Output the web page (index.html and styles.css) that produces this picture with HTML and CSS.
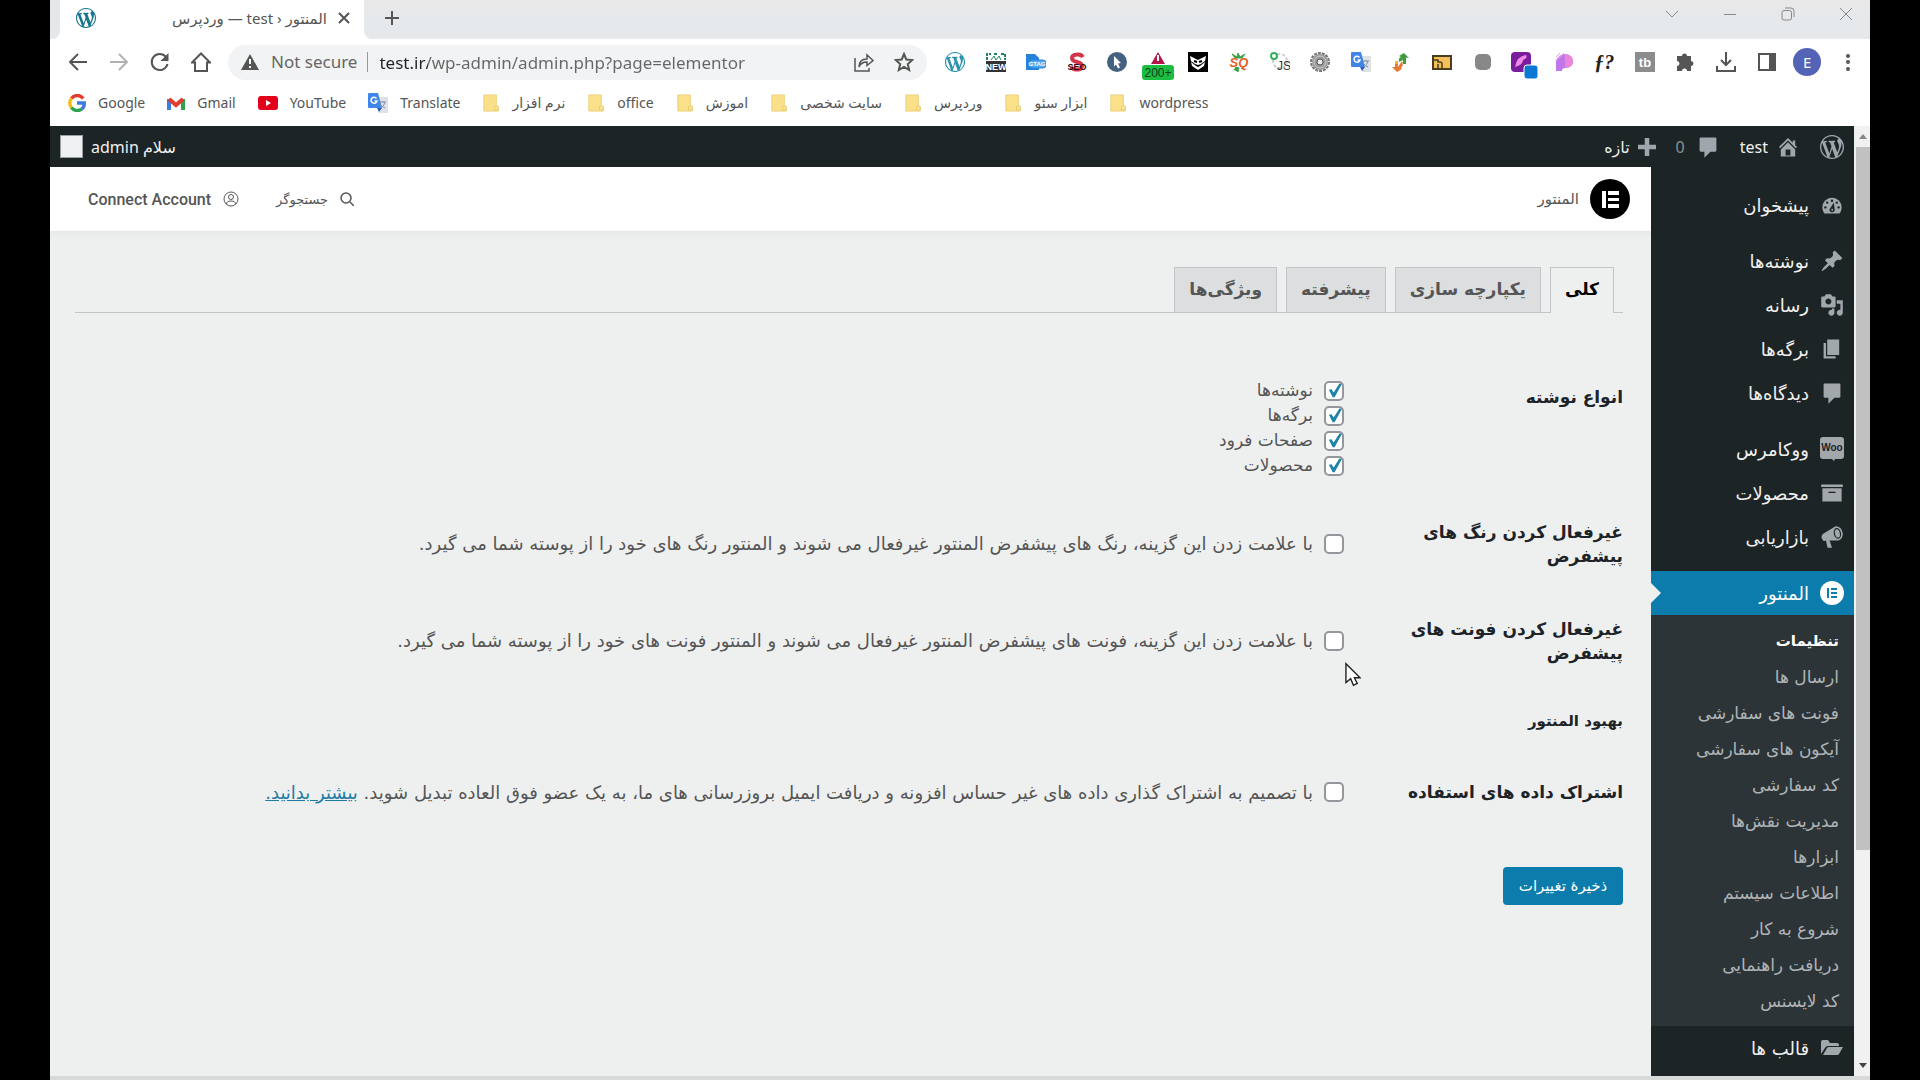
FILE: index.html
```html
<!DOCTYPE html>
<html lang="fa">
<head>
    <meta charset="UTF-8">
    <meta name="viewport" content="width=device-width, initial-scale=1.0">
    <title>المنتور ‹ test — وردپرس</title>
    <link rel="stylesheet" href="styles.css">
</head>
<body>
    <svg class="sprite" aria-hidden="true">
        <symbol id="wp" viewBox="0 0 20 20"><path d="M20 10c0-5.51-4.49-10-10-10C4.48 0 0 4.49 0 10c0 5.52 4.48 10 10 10 5.51 0 10-4.48 10-10zM7.78 15.37L4.37 6.22c.55-.02 1.17-.08 1.17-.08.5-.06.44-1.13-.06-1.11 0 0-1.45.11-2.37.11-.18 0-.37 0-.58-.01C4.12 2.69 6.87 1.11 10 1.11c2.33 0 4.45.87 6.05 2.34-.68-.11-1.65.39-1.65 1.58 0 .74.45 1.36.9 2.1.35.61.55 1.36.55 2.46 0 1.49-1.4 5-1.4 5l-3.03-8.37c.54-.02.82-.17.82-.17.5-.05.44-1.25-.06-1.22 0 0-1.44.12-2.38.12-.87 0-2.33-.12-2.33-.12-.5-.03-.56 1.2-.06 1.22l.92.08 1.26 3.41zM17.41 10c.24-.64.74-1.87.43-4.25.7 1.29 1.05 2.71 1.05 4.25 0 3.29-1.73 6.24-4.4 7.78.97-2.59 1.94-5.2 2.92-7.78zM6.1 18.09C3.12 16.65 1.11 13.53 1.11 10c0-1.3.23-2.48.72-3.59C3.25 10.3 4.67 14.2 6.1 18.09zm4.03-6.63l2.58 6.98c-.86.29-1.76.45-2.71.45-.79 0-1.57-.11-2.29-.33.81-2.38 1.62-4.74 2.42-7.1z"/></symbol>
        <symbol id="comment" viewBox="0 0 20 20"><path d="M4 2h12c.6 0 1 .4 1 1v10c0 .6-.4 1-1 1h-4l-5 5v-5H4c-.6 0-1-.4-1-1V3c0-.6.4-1 1-1z"/></symbol>
        <symbol id="folder" viewBox="0 0 18 20"><path d="M1 1h14v12l2 1v5H1z" fill="#fbe08a" stroke="#ead07c"/><path d="M13 18v-4l2-1 2 1v4z" fill="#fbe7a4" stroke="#e5c863"/></symbol>
        <symbol id="translate" viewBox="0 0 20 20"><path d="M8 4h12v16H11z" fill="#dfe1e5"/><path d="M1 0h9l4 15H1c-1 0-1-1-1-1V1s0-1 1-1z" fill="#3f86e8"/><path d="M9 15h5l-3 4z" fill="#2b5fc0"/><path d="M8.500 5.500A3 3 0 1 0 9 8H6.500" fill="none" stroke="#fff" stroke-width="1.500"/><path d="M12 9h6m-3-1v1m2 0q-1 4-4 6m-1-4q2 3 5 4" fill="none" stroke="#7b8fa5"/></symbol>
    </svg>

    <div class="window">
        <header class="tabstrip">
            <div class="tab-left"></div>
            <div class="tab">
                <svg class="i20" viewBox="0 0 20 20" fill="#15758a"><use href="#wp"/></svg>
                <span class="tab-title" dir="rtl">المنتور ‹ test — وردپرس</span>
                <button class="plain" aria-label="Close tab"><svg class="i12" viewBox="0 0 12 12"><path class="line" d="M1 1l10 10M11 1L1 11"/></svg></button>
            </div>
            <div class="tab-rest">
                <button class="plain" aria-label="New tab"><svg class="i16" viewBox="0 0 16 16"><path class="line" d="M8 1v14M1 8h14"/></svg></button>
                <div class="win-controls">
                    <button class="plain" aria-label="Search tabs"><svg class="i14" viewBox="0 0 14 14"><path class="thin" d="M1 4l6 6 6-6"/></svg></button>
                    <button class="plain" aria-label="Minimize"><svg class="i14" viewBox="0 0 14 14"><path class="thin" d="M1 7.500h12"/></svg></button>
                    <button class="plain" aria-label="Restore"><svg class="i14" viewBox="0 0 14 14"><rect class="thin" x="1" y="3.500" width="9.500" height="9.500" rx="2"/><path class="thin" d="M4 1h6q3 0 3 3v6"/></svg></button>
                    <button class="plain" aria-label="Close"><svg class="i14" viewBox="0 0 14 14"><path class="thin" d="M1 1l12 12M13 1L1 13"/></svg></button>
                </div>
            </div>
        </header>

        <div class="toolbar">
            <div class="nav">
                <button class="plain" aria-label="Back"><svg class="i20" viewBox="0 0 20 20"><path class="line" d="M19 10H2M10 2l-8 8 8 8"/></svg></button>
                <button class="plain faded" aria-label="Forward"><svg class="i20" viewBox="0 0 20 20"><path class="line" d="M1 10h17M10 2l8 8-8 8"/></svg></button>
                <button class="plain" aria-label="Reload"><svg class="i20" viewBox="0 0 20 20"><path class="line" d="M16 5A8 8 0 1 0 17.500 12"/><path d="M18.500 1v8h-8z" fill="#555"/></svg></button>
                <button class="plain" aria-label="Home"><svg class="i20" viewBox="0 0 20 20"><path class="line" d="M1 10.500L10 1.500l9 9h-3V19H4v-8.500z"/></svg></button>
            </div>
            <div class="omnibox">
                <svg class="i18" viewBox="0 0 18 16"><path d="M9 0l9 16H0z" fill="#555"/><path d="M9 5v5M9 12v2" stroke="#fff" stroke-width="2"/></svg>
                <label class="secure" for="url">Not secure</label>
                <input class="url" id="url" type="text" value="test.ir/wp-admin/admin.php?page=elementor">
                <button class="plain" aria-label="Share"><svg class="i20" viewBox="0 0 20 20"><path class="mid" d="M1 6v13h14v-3M5 15q0-8 8-8V3l6 5.500-6 5V10q-6 0-8 5z"/></svg></button>
                <button class="plain" aria-label="Bookmark"><svg class="i20" viewBox="0 0 20 20"><path class="line" d="M10 2l2.300 5.500 6 .5-4.500 4 1.400 6-5.200-3.200L4.800 18l1.400-6L1.700 8l6-.5z"/></svg></button>
            </div>
            <div class="extensions">
                <svg class="i20" viewBox="0 0 20 20"><path d="M10 0v20M0 10h20" stroke="#777" stroke-width="2"/><circle cx="10" cy="10" r="9" fill="#fff"/><use href="#wp" fill="#2b93ad"/></svg>
                <svg class="i20" viewBox="0 0 20 20"><path d="M1 8V2h4m3 0h4m3 0h4v6" fill="none" stroke="#208060" stroke-width="2" stroke-dasharray="3 1"/><path d="M5 8l3-4 2 4 3-4 2 4" fill="none" stroke="#208060"/><path d="M0 9h20v11H0z" fill="#333"/><text x="10" y="18" class="ico-text" font-size="9" fill="#fff">NEW</text></svg>
                <svg class="i20" viewBox="0 0 20 20"><path d="M0 2h9l4 4v12H0z" fill="#2583dc"/><rect x="3" y="8" width="17" height="8" rx="3" fill="#55a8ee" stroke="#2583dc"/><text x="11" y="14" class="ico-text" font-size="6" fill="#fff">GTAG</text></svg>
                <svg class="i20" viewBox="0 0 20 20"><path d="M16 5Q14 2 10 2.500 5 3 5 6q0 3 5 4t5 4.500Q14 18 10 17.500 6 18 4 15" fill="none" stroke="#d2364b" stroke-width="4"/><text x="10" y="18" class="ico-text" font-size="9" fill="#3a0610">SEO</text></svg>
                <svg class="i20" viewBox="0 0 20 20"><circle cx="10" cy="10" r="10" fill="#456180"/><path d="M7 4l7 7-3 .5 2 4-2 1-2-4-2 2z" fill="#fff"/></svg>
                <svg class="badge-icon" viewBox="0 0 32 28"><path d="M16 0l7 12H9z" fill="#b2164b"/><path d="M16 3v6" stroke="#fff" stroke-width="2"/><rect x="0" y="13" width="32" height="15" rx="3" fill="#1bbd42"/><text x="16" y="25" class="ico-text light" font-size="12" fill="#103d1a">200+</text></svg>
                <svg class="i20" viewBox="0 0 20 20"><path d="M0 0h20v20H0z"/><path d="M2 4l8 4 8-4-1 5-4 3-3 1-3-1-4-3zM3 10l5 4 2 1 2-1 5-4-1 4-6 4-6-4z" fill="#fff"/><path d="M6 9l3 1M14 9l-3 1" stroke="#000" stroke-width="2"/></svg>
                <svg class="i20" viewBox="0 0 20 20"><path d="M3 2l5 3 1-4 2 4 5-3-3 4H6zM5 18l2-3 3 1-1 4M12 16l4 2" fill="#3aa04a" stroke="#3aa04a"/><text x="10" y="15" class="ico-text slant" font-size="13" fill="#e8602c">SQ</text></svg>
                <svg class="i20" viewBox="0 0 20 20"><circle cx="10" cy="9" r="7" fill="none" stroke="#ccc" stroke-width="2" stroke-dasharray="3 2"/><circle cx="4" cy="4" r="3" fill="#fff" stroke="#35ae5c" stroke-width="2"/><text x="14" y="18" class="ico-text light" font-size="12" fill="#333">JS</text></svg>
                <svg class="i20" viewBox="0 0 20 20"><circle cx="10" cy="10" r="8" fill="#999"/><circle cx="10" cy="10" r="9" fill="none" stroke="#777" stroke-width="2" stroke-dasharray="3 1"/><circle cx="10" cy="10" r="6" fill="none" stroke="#ccc"/><circle cx="10" cy="10" r="3" fill="#eee" stroke="#555"/></svg>
                <svg class="i20"><use href="#translate"/></svg>
                <svg class="i20" viewBox="0 0 20 20"><path d="M8 10q-1-4 2-5l-2-1 5-3 5 5-3-.5V12h-3V8z" fill="#3f9d3c"/><path d="M11 9q2 5-1 7l1 1-5 3-5-5h3v-3l3-2v5z" fill="#e87838"/><path d="M4 9h3v3H4z" fill="#f5b030"/></svg>
                <svg class="i20" viewBox="0 0 20 20"><path d="M1 4h18v13H1z" fill="#f2bf58" stroke="#4a3c20" stroke-width="2"/><path d="M2 8h4v2h2q2 0 2 2v4M6 16v-4" fill="none" stroke="#4a3c20" stroke-width="1.500"/></svg>
                <svg class="i20" viewBox="0 0 20 20"><rect x="2" y="2" width="16" height="16" rx="5" fill="#888"/></svg>
                <svg class="badge-icon" viewBox="0 0 32 28"><rect x="4" y="0" width="20" height="20" rx="4" fill="#7a1d9c"/><path d="M8 15Q10 4 19 3q2 3-3 5 0 5-8 7z" fill="#ef8ae6"/><rect x="17" y="13" width="14" height="14" rx="3" fill="#0b79d4" stroke="#fff"/></svg>
                <svg class="i20" viewBox="0 0 20 20"><path d="M2 8q4-6 9-6 8 1 8 7 0 7-8 7-3 0-3 3H2z" fill="#c077ea"/><path d="M11 2q8 1 8 7 0 7-8 7z" fill="#ec86d8"/><path d="M2 5l4-4M2 9l8-8" stroke="#df98ec"/></svg>
                <span class="fq">ƒ?</span>
                <svg class="i20" viewBox="0 0 20 20"><path d="M0 0h20v20H0z" fill="#8c8c8c"/><text x="10" y="15" class="ico-text" font-size="13" fill="#fff">tb</text></svg>
                <svg class="i20" viewBox="0 0 20 20"><path d="M7 4a2.500 2.500 0 0 1 5 0h4v5a2.500 2.500 0 0 1 0 5v5h-4a2.500 2.500 0 0 0-5 0H2v-5a2.500 2.500 0 0 0 0-5V4z" fill="#555"/></svg>
                <svg class="i20" viewBox="0 0 20 20"><path class="line" d="M10 0v12M5 8l5 5 5-5M1 14v5h18v-5"/></svg>
                <svg class="i20" viewBox="0 0 20 20"><path d="M2 2h16v16H2z" fill="none" stroke="#555" stroke-width="2"/><path d="M12 2h6v16h-6z" fill="#555"/></svg>
                <span class="profile">E</span>
                <svg class="i20" viewBox="0 0 20 20" fill="#555"><circle cx="10" cy="4" r="2"/><circle cx="10" cy="10" r="2"/><circle cx="10" cy="17" r="2"/></svg>
            </div>
        </div>

        <nav class="bookmarks">
            <a href="#"><svg class="i18" viewBox="0 0 16 16" fill="none" stroke-width="3"><path d="M13.500 4A6.500 6.500 0 0 0 3 4" stroke="#e33b2e"/><path d="M3 4a6.500 6.500 0 0 0 0 8" stroke="#f6b90c"/><path d="M3 12a6.500 6.500 0 0 0 9 1.500" stroke="#2fa24f"/><path d="M12 13.500Q14.500 12 14.500 8H8" stroke="#3c7be0"/></svg>Google</a>
            <a href="#"><svg class="i18" viewBox="0 0 18 14" fill="none" stroke-width="4"><path d="M2 14V3" stroke="#3c7be0"/><path d="M16 14V3" stroke="#2fa24f"/><path d="M2 3l7 6 7-6" stroke="#e33b2e"/></svg>Gmail</a>
            <a href="#"><svg class="i20" viewBox="0 0 20 20"><rect y="3" width="20" height="14" rx="3" fill="#e2001a"/><path d="M8 7l5 3-5 3z" fill="#fff"/></svg>YouTube</a>
            <a href="#"><svg class="i20"><use href="#translate"/></svg>Translate</a>
            <a href="#"><svg class="i18"><use href="#folder"/></svg>نرم افزار</a>
            <a href="#"><svg class="i18"><use href="#folder"/></svg>office</a>
            <a href="#"><svg class="i18"><use href="#folder"/></svg>اموزش</a>
            <a href="#"><svg class="i18"><use href="#folder"/></svg>سایت شخصی</a>
            <a href="#"><svg class="i18"><use href="#folder"/></svg>وردپرس</a>
            <a href="#"><svg class="i18"><use href="#folder"/></svg>ابزار سئو</a>
            <a href="#"><svg class="i18"><use href="#folder"/></svg>wordpress</a>
        </nav>

        <div class="viewport">
            <div class="wp" dir="rtl">
                <div class="adminbar">
                    <a href="#"><svg class="i24" viewBox="0 0 20 20"><use href="#wp"/></svg></a>
                    <a href="#"><svg class="i24" viewBox="0 0 20 20"><path d="M16 8.500l1.530 1.530-1.060 1.060L10 4.600l-6.470 6.490-1.060-1.060L10 2.500l4 4v-2h2v4zm-6-2.460l6 5.990V18H4v-5.970zM12 17v-5H8v5h4z"/></svg>test</a>
                    <a href="#" class="muted"><svg class="i24"><use href="#comment"/></svg>0</a>
                    <a href="#"><svg class="i18" viewBox="0 0 16 16"><path d="M6 0h4v6h6v4h-6v6H6v-6H0V6h6z"/></svg>تازه</a>
                    <a href="#" class="account"><span>سلام admin</span><i class="avatar"></i></a>
                </div>

                <div class="wp-body">
                    <aside class="menu">
                        <a href="#"><svg class="i24" viewBox="0 0 20 20"><path d="M3.760 17h12.480C17.340 15.630 18 13.900 18 12c0-4.410-3.580-8-8-8s-8 3.590-8 8c0 1.900.66 3.630 1.760 5z"/><g fill="#1d2426"><circle cx="10" cy="6.500" r="1"/><circle cx="6" cy="8" r="1"/><circle cx="14" cy="8" r="1"/><circle cx="4.500" cy="12" r="1"/><circle cx="15.500" cy="12" r="1"/><path d="M11.500 8l.8 6q0 2-2.300 2t-2-2.500z"/></g><circle cx="10.200" cy="14" r=".8"/></svg>پیشخوان</a>
                        <hr>
                        <a href="#"><svg class="i24" viewBox="0 0 20 20"><path d="M10.440 3.020l1.820-1.820 6.360 6.350-1.830 1.820c-1.050-.68-2.480-.57-3.410.36l-.75.75c-.92.93-1.040 2.350-.35 3.410l-1.830 1.820-2.410-2.410-2.800 2.790c-.42.42-3.380 2.710-3.800 2.290s1.860-3.390 2.280-3.810l2.790-2.790L4.100 9.360l1.830-1.820c1.050.69 2.480.57 3.400-.36l.75-.75c.93-.92 1.050-2.350.36-3.410z"/></svg>نوشته‌ها</a>
                        <a href="#"><svg class="i24" viewBox="0 0 20 20"><path d="M13 11V4c0-.55-.45-1-1-1h-1.670L9 1H5L3.670 3H2c-.55 0-1 .45-1 1v7c0 .55.45 1 1 1h10c.55 0 1-.45 1-1zM7 4.500c1.380 0 2.500 1.120 2.500 2.500S8.380 9.500 7 9.500 4.500 8.380 4.500 7 5.620 4.500 7 4.500zM14 6h5v10.500c0 1.380-1.120 2.500-2.500 2.500S14 17.880 14 16.500s1.120-2.500 2.500-2.500c.17 0 .34.02.5.05V9h-3V6zm-4 8.050V13h2v3.500c0 1.380-1.120 2.500-2.500 2.500S7 17.880 7 16.500 8.120 14 9.500 14c.17 0 .34.02.5.05z"/></svg>رسانه</a>
                        <a href="#"><svg class="i24" viewBox="0 0 20 20"><path d="M6 15V2h10v13H6zm-1 1h8v2H3V5h2v11z"/></svg>برگه‌ها</a>
                        <a href="#"><svg class="i24"><use href="#comment"/></svg>دیدگاه‌ها</a>
                        <hr>
                        <a href="#"><svg class="i24" viewBox="0 0 24 24"><path d="M3 0h18q3 0 3 3v16q0 3-3 3h-6l-1 2-2-2H3q-3 0-3-3V3q0-3 3-3z"/><text x="12" y="14" class="ico-text" font-size="10" fill="#1d2426">Woo</text></svg>ووکامرس</a>
                        <a href="#"><svg class="i24" viewBox="0 0 20 20"><path d="M19 3v2H1V3h18zM2 6h16v11H2V6zm11 4V9H7v1h6z"/></svg>محصولات</a>
                        <a href="#"><svg class="i24" viewBox="0 0 20 20"><path d="M13 1L3 7Q0 9 2 12q1 2 3 1l1 5q0 1 1 1h3l-2-6h7q4-1 4-6-1-6-6-6z"/><ellipse cx="14.500" cy="7" rx="2.500" ry="4" fill="none" stroke="#1d2426" transform="rotate(-12 14.500 7)"/></svg>بازاریابی</a>
                        <hr>
                        <a href="#" class="current"><svg class="i24" viewBox="0 0 24 24"><circle cx="12" cy="12" r="12"/><path d="M7 7h2v10H7zM11 7h6v2h-6zM11 11h6v2h-6zM11 15h6v2h-6z" fill="#0b7cab"/></svg>المنتور</a>
                        <div class="submenu">
                            <a href="#" class="active">تنظیمات</a>
                            <a href="#">ارسال ها</a>
                            <a href="#">فونت های سفارشی</a>
                            <a href="#">آیکون های سفارشی</a>
                            <a href="#">کد سفارشی</a>
                            <a href="#">مدیریت نقش‌ها</a>
                            <a href="#">ابزارها</a>
                            <a href="#">اطلاعات سیستم</a>
                            <a href="#">شروع به کار</a>
                            <a href="#">دریافت راهنمایی</a>
                            <a href="#">کد لایسنس</a>
                        </div>
                        <a href="#"><svg class="i24" viewBox="0 0 24 24"><path d="M1 18V6q0-2 2-2h5l2 3h7q2 0 2 2v1H8q-2 0-3 2z"/><path d="M3 19l4-7q.5-1 2-1h14l-4 7q-.5 1-2 1z"/></svg>قالب ها</a>
                    </aside>

                    <main class="content">
                        <div class="topbar">
                            <div class="brand"><svg class="i40" viewBox="0 0 40 40"><circle cx="20" cy="20" r="20"/><path d="M12 12h4v17h-4zM18 12h11v4H18zM18 19h11v3H18zM18 25h11v4H18z" fill="#fff"/></svg><span>المنتور</span></div>
                            <div class="topbar-links">
                                <a href="#"><svg class="i14" viewBox="0 0 14 14"><circle class="mid" cx="6" cy="6" r="5"/><path class="mid" d="M10 10l4 4"/></svg><span>جستجوگر</span></a>
                                <a href="#"><svg class="i16" viewBox="0 0 16 16"><circle class="thin dark" cx="8" cy="8" r="7"/><circle class="thin dark" cx="8" cy="6" r="2.500"/><path class="thin dark" d="M3.500 13q0-3 4.500-3t4.500 3"/></svg><b>Connect Account</b></a>
                            </div>
                        </div>

                        <nav class="nav-tabs">
                            <a href="#" class="selected">کلی</a>
                            <a href="#">یکپارچه سازی</a>
                            <a href="#">پیشرفته</a>
                            <a href="#">ویژگی‌ها</a>
                        </nav>

                        <form class="settings">
                            <div class="row types">
                                <div class="row-label">انواع نوشته</div>
                                <div class="field">
                                    <label><input type="checkbox" checked>نوشته‌ها</label>
                                    <label><input type="checkbox" checked>برگه‌ها</label>
                                    <label><input type="checkbox" checked>صفحات فرود</label>
                                    <label><input type="checkbox" checked>محصولات</label>
                                </div>
                            </div>
                            <div class="row">
                                <div class="row-label">غیرفعال کردن رنگ های پیشفرض</div>
                                <div class="field"><label><input type="checkbox">با علامت زدن این گزینه، رنگ های پیشفرض المنتور غیرفعال می شوند و المنتور رنگ های خود را از پوسته شما می گیرد.</label></div>
                            </div>
                            <div class="row">
                                <div class="row-label">غیرفعال کردن فونت های پیشفرض</div>
                                <div class="field">
                                    <label><input type="checkbox">با علامت زدن این گزینه، فونت های پیشفرض المنتور غیرفعال می شوند و المنتور فونت های خود را از پوسته شما می گیرد.</label>
                                    <svg class="pointer" viewBox="0 0 17 25"><path d="M1 1v20l5-4 3 7 4-2-3-6h6z" fill="#fff" stroke="#222" stroke-width="1.500"/></svg>
                                </div>
                            </div>
                            <h2>بهبود المنتور</h2>
                            <div class="row usage">
                                <div class="row-label">اشتراک داده های استفاده</div>
                                <div class="field"><label><input type="checkbox"><span>با تصمیم به اشتراک گذاری داده های غیر حساس افزونه و دریافت ایمیل بروزرسانی های ما، به یک عضو فوق العاده تبدیل شوید. <a href="#">بیشتر بدانید.</a></span></label></div>
                            </div>
                            <button type="button" class="save">ذخیرهٔ تغییرات</button>
                        </form>
                    </main>
                </div>
            </div>
            <div class="scrollbar">
                <span class="arrow up"></span>
                <div class="thumb"></div>
                <span class="arrow down"></span>
            </div>
        </div>
    </div>
</body>
</html>
```
FILE: styles.css
```css
* {
    box-sizing: border-box;
}
body {
    margin: 0;
    padding: 0 50px;
    background: #000;
    font-family: "Noto Sans", "DejaVu Sans", sans-serif;
    font-size: 14px;
    color: #555;
}
a {
    color: inherit;
    text-decoration: none;
}
svg {
    flex: none;
    display: block;
}
.sprite {
    position: absolute;
    width: 0;
    height: 0;
}
.i12 { width: 12px; height: 12px; }
.i14 { width: 14px; height: 14px; }
.i16 { width: 16px; height: 16px; }
.i18 { width: 18px; height: 18px; }
.i20 { width: 20px; height: 20px; }
.i24 { width: 24px; height: 24px; }
.i40 { width: 40px; height: 40px; }
.line {
    fill: none;
    stroke: #555;
    stroke-width: 2;
}
.mid {
    fill: none;
    stroke: #555;
    stroke-width: 1.5;
}
.thin {
    fill: none;
    stroke: #888;
}
.dark {
    stroke: #555;
}
.ico-text {
    font-family: "Liberation Sans", sans-serif;
    font-weight: bold;
    text-anchor: middle;
}
.light {
    font-weight: normal;
}
.slant {
    font-style: italic;
}
.plain {
    border: 0;
    padding: 0;
    background: none;
}
.faded {
    opacity: 0.45;
}
.window {
    min-height: 100vh;
    display: flex;
    flex-direction: column;
    background: #fff;
    border-bottom: 4px solid #d8dada;
}

/* browser chrome */
.tabstrip {
    display: flex;
    height: 39px;
    background: #fff;
}
.tab-left {
    width: 10px;
    background: #e5e8ea;
    border-radius: 0 0 8px 0;
}
.tab {
    width: 304px;
    display: flex;
    align-items: center;
    gap: 11px;
    padding: 0 14px 3px 16px;
}
.tab-title {
    flex: 1;
    font-size: 15px;
    white-space: nowrap;
}
.tab-rest {
    flex: 1;
    display: flex;
    justify-content: space-between;
    align-items: flex-start;
    padding: 10px 17px 0 20px;
    background: linear-gradient(#e9e8e8, #e5e9eb 40%);
    border-radius: 0 0 0 8px;
}
.win-controls {
    display: flex;
    gap: 44px;
    margin-top: -3px;
}
.toolbar {
    display: flex;
    align-items: center;
    height: 46px;
    padding: 0 8px 0 18px;
}
.nav {
    display: flex;
    gap: 21px;
    margin-right: 17px;
}
.omnibox {
    flex: 1;
    display: flex;
    align-items: center;
    height: 35px;
    padding: 0 13px;
    border-radius: 18px;
    background: #f1f3f4;
    font-size: 17px;
}
.secure {
    margin-left: 12px;
    padding-right: 10px;
    border-right: 1px solid #999;
    color: #666;
    line-height: 20px;
}
/* host part is darker than the path */
.url {
    flex: 1;
    margin-left: 11px;
    padding: 0;
    border: 0;
    outline: 0;
    background: linear-gradient(90deg, #222 49px, #666 49px);
    -webkit-background-clip: text;
    background-clip: text;
    color: transparent;
    font: inherit;
}
.omnibox .plain + .plain {
    margin-left: 20px;
}
.extensions {
    width: 921px;
    display: flex;
    justify-content: space-between;
    align-items: center;
    margin-left: 14px;
}
.extensions > * {
    margin: 0 4px;
}
.extensions > .badge-icon {
    width: 32px;
    height: 28px;
    margin: 8px -2px 0;
}
.extensions > .fq {
    width: 20px;
    font: italic bold 20px/20px "Liberation Serif", serif;
    color: #222;
    white-space: nowrap;
}
.extensions > .profile {
    width: 28px;
    height: 28px;
    margin: 0;
    border-radius: 50%;
    background: #5363b5;
    color: #fff;
    font-size: 15px;
    line-height: 28px;
    text-align: center;
}
.bookmarks {
    display: flex;
    align-items: center;
    gap: 22px;
    height: 41px;
    padding: 0 18px 6px;
}
.bookmarks a {
    display: flex;
    align-items: center;
    gap: 12px;
    white-space: nowrap;
}

/* wordpress page */
.viewport {
    flex: 1;
    display: flex;
}
.wp {
    flex: 1;
    display: flex;
    flex-direction: column;
    background: #eef0f0;
    font-family: "DejaVu Sans", sans-serif;
}
.adminbar {
    display: flex;
    align-items: center;
    gap: 20px;
    height: 41px;
    padding: 0 10px;
    background: #1d2426;
    color: #f0f0f0;
    fill: #a0a6ab;
    font-family: "Noto Sans", "DejaVu Sans", sans-serif;
    font-size: 16px;
}
.adminbar a {
    display: flex;
    align-items: center;
    gap: 8px;
}
.adminbar .muted {
    color: #8b9094;
    gap: 11px;
}
.adminbar .account {
    margin-right: auto;
}
.avatar {
    width: 23px;
    height: 23px;
    background: #eef0f2;
    border: 1px solid #9aa0a4;
}
.wp-body {
    flex: 1;
    display: flex;
}
.menu {
    width: 203px;
    padding-top: 16px;
    background: #1d2426;
    color: #f0f0f0;
    fill: #a2a7ac;
    font-size: 18px;
}
.menu > a {
    display: flex;
    align-items: center;
    gap: 11px;
    height: 44px;
    padding: 0 10px;
}
.menu hr {
    height: 12px;
    margin: 0;
    border: 0;
}
.menu > .current {
    position: relative;
    background: #0b7cab;
    color: #fff;
    fill: #fff;
}
.menu > .current::after {
    content: "";
    position: absolute;
    left: 0;
    top: 12px;
    border: 10px solid transparent;
    border-left-color: #eef0f0;
    border-right-width: 0;
}
.submenu {
    padding: 8px 15px 7px;
    background: #2c3437;
    color: #b0b4b7;
    font-size: 17px;
}
.submenu a {
    display: block;
    line-height: 36px;
}
.submenu .active {
    color: #fff;
    font-size: 15px;
    font-weight: bold;
}
.content {
    flex: 1;
}
.topbar {
    display: flex;
    justify-content: space-between;
    align-items: center;
    height: 64px;
    padding: 0 21px 0 38px;
    background: #fff;
    box-shadow: 0 2px 8px rgba(0, 0, 0, 0.05);
}
.brand {
    display: flex;
    align-items: center;
    gap: 11px;
    font-size: 15px;
}
.topbar-links {
    display: flex;
    gap: 37px;
}
.topbar-links a {
    display: flex;
    align-items: center;
    gap: 12px;
}
.topbar-links span {
    font-size: 13px;
}
.topbar-links b {
    font-family: Roboto, sans-serif;
    font-size: 16px;
    font-weight: 500;
}
.nav-tabs {
    display: flex;
    align-items: flex-end;
    gap: 9px;
    margin: 36px 28px 0 25px;
    padding: 0 9px;
    border-bottom: 1px solid #c3c4c7;
}
.nav-tabs a {
    height: 45px;
    padding: 0 14px;
    border: 1px solid #c3c4c7;
    border-bottom: 0;
    background: #dcdedf;
    font-size: 17px;
    font-weight: bold;
    line-height: 43px;
}
.nav-tabs .selected {
    height: 46px;
    margin-bottom: -1px;
    background: #eef0f0;
    color: #000;
}
.settings {
    padding: 65px 28px 0 25px;
}
.row {
    display: flex;
    align-items: center;
    min-height: 97px;
}
.types {
    align-items: flex-start;
    min-height: 117px;
}
.types .row-label {
    padding-top: 7px;
}
.row-label {
    width: 279px;
    padding-left: 30px;
    color: #1d2327;
    font-size: 17px;
    font-weight: bold;
    line-height: 24px;
}
.field {
    flex: 1;
    position: relative;
    font-size: 18px;
}
.types .field {
    font-size: 17px;
}
.field label {
    display: flex;
    align-items: center;
    gap: 11px;
    line-height: 25px;
}
input[type="checkbox"] {
    appearance: none;
    flex: none;
    width: 20px;
    height: 20px;
    margin: 0;
    border: 2px solid #93979b;
    border-radius: 5px;
    background: #fff;
}
input[type="checkbox"]:checked::before {
    content: "";
    display: block;
    width: 16px;
    height: 16px;
    background: #1f82a8;
    clip-path: polygon(18% 45%, 34% 42%, 48% 62%, 84% 6%, 100% 8%, 54% 92%, 42% 92%);
}
.field a {
    color: #1f7ba3;
    text-decoration: underline;
}
.pointer {
    position: absolute;
    right: -17px;
    top: 34px;
    width: 16px;
    height: 25px;
}
.settings h2 {
    margin: 20px 0;
    color: #1d2327;
    font-size: 15px;
    line-height: 24px;
}
.usage {
    min-height: 78px;
}
.save {
    height: 38px;
    width: 120px;
    margin-top: 36px;
    border: 0;
    border-radius: 4px;
    background: #0b7cab;
    color: #fff;
    font-family: "DejaVu Sans", sans-serif;
    font-size: 15px;
}
.scrollbar {
    width: 16px;
    display: flex;
    flex-direction: column;
    align-items: stretch;
    padding-left: 2px;
    background: #f1f1f1;
}
.arrow {
    height: 21px;
    display: flex;
    justify-content: center;
    align-items: center;
}
.arrow::before {
    content: "";
    border: 4px solid transparent;
}
.up::before {
    border-top: 0;
    border-bottom: 5px solid #888;
}
.down::before {
    border-bottom: 0;
    border-top: 5px solid #444;
}
.thumb {
    flex: 0 0 74%;
    background: #c1c1c1;
    margin-bottom: auto;
}
```
